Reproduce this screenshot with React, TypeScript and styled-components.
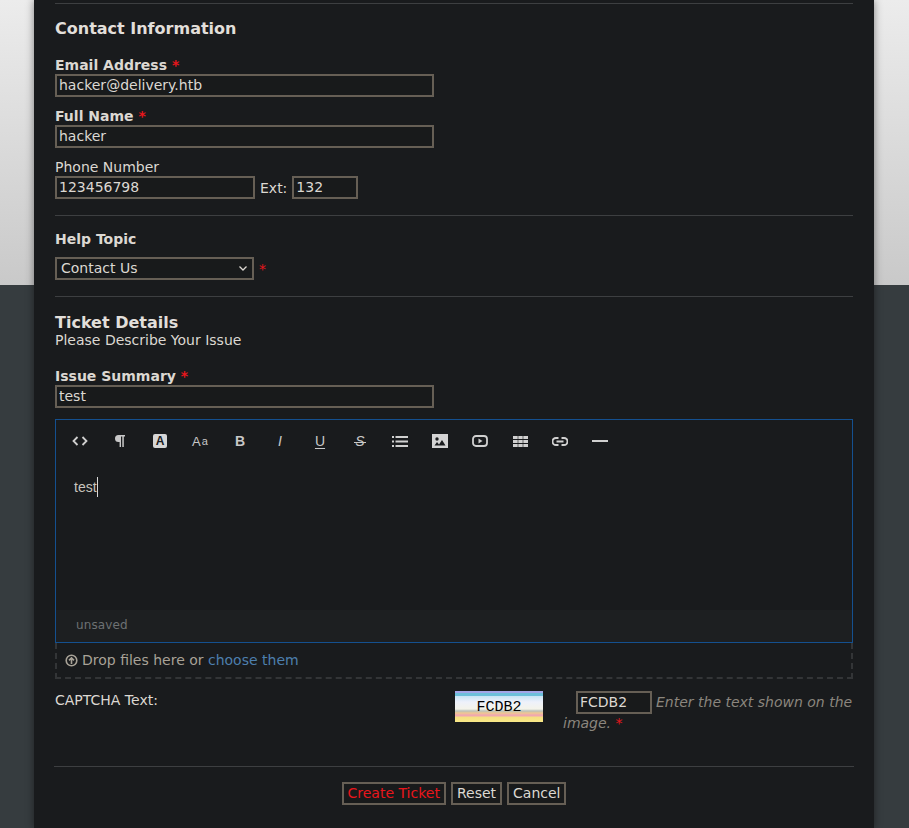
import React from 'react';
import styled, { createGlobalStyle } from 'styled-components';

const GlobalStyle = createGlobalStyle`
    html, body {
        margin: 0;
        height: 100%;
    }
    body {
        background: linear-gradient(#ececec, #c9c9c9) 0 0 / 100% 285px no-repeat, #363c3f;
        font-family: "DejaVu Sans", sans-serif;
        font-size: 14px;
        color: #dcd8d2;
        overflow: hidden;
    }
`;

const Card = styled.div`
    box-sizing: border-box;
    width: 840px;
    height: 828px;
    margin-left: 34px;
    padding: 3px 21px 0 21px;
    background: #191b1d;
    box-shadow: 0 0 8px rgba(0, 0, 0, 0.45);
`;

const Rule = styled.hr<{ $top?: number; $bottom?: number }>`
    border: 0;
    height: 1px;
    background: #3d3f41;
    margin: ${(p) => p.$top ?? 0}px 0 ${(p) => p.$bottom ?? 0}px 0;
`;

const FooterRule = styled(Rule)`
    margin-left: -1px;
    margin-right: -1px;
`;

const Heading = styled.h3<{ $top: number }>`
    margin: ${(p) => p.$top}px 0 0 0;
    font-size: 16px;
    line-height: 20px;
    font-weight: 700;
    color: #e2dfda;
`;

const Subtitle = styled.div`
    line-height: 16px;
    margin-top: -1px;
    color: #dcd8d2;
`;

const Label = styled.label<{ $top: number; $bold?: boolean }>`
    display: block;
    margin-top: ${(p) => p.$top}px;
    line-height: 17px;
    font-weight: ${(p) => (p.$bold ? 700 : 400)};
    color: #dcd8d2;
`;

const Req = styled.span`
    color: #e8161c;
`;

const Input = styled.input<{ $width: number }>`
    display: block;
    box-sizing: border-box;
    width: ${(p) => p.$width}px;
    height: 23px;
    padding: 0 2px 2px 2px;
    border: 2px solid #665f55;
    background: #181a1b;
    color: #dcd8d2;
    font-family: inherit;
    font-size: 14px;
    outline: none;
`;

const PhoneRow = styled.div`
    display: flex;
    align-items: center;
    gap: 5px;
`;

const HelpRow = styled.div`
    display: flex;
    align-items: center;
    gap: 5px;
    margin-top: 9px;
`;

const Select = styled.div`
    box-sizing: border-box;
    width: 199px;
    height: 23px;
    padding: 0 5px 0 4px;
    border: 2px solid #665f55;
    background: #181a1b;
    display: flex;
    align-items: center;
    justify-content: space-between;
    line-height: 19px;
`;

const Editor = styled.div`
    box-sizing: border-box;
    height: 224px;
    margin-top: 11px;
    border: 1px solid #14508f;
    display: flex;
    flex-direction: column;
`;

const Toolbar = styled.div`
    display: flex;
    height: 42px;
    padding-left: 4px;
`;

const Tool = styled.span`
    width: 40px;
    height: 42px;
    display: flex;
    align-items: center;
    justify-content: center;
    color: #c8c8c8;
    font-family: "Liberation Sans", sans-serif;
    font-size: 14px;
    font-weight: 400;
`;

const BoldTool = styled(Tool)`
    font-weight: 700;
`;

const ItalicTool = styled(Tool)`
    font-style: italic;
`;

const UnderTool = styled(Tool)`
    text-decoration: underline;
    text-underline-offset: 2px;
`;

const StrikeTool = styled(Tool)`
    position: relative;
    font-style: italic;

    &::after {
        content: "";
        position: absolute;
        left: 14px;
        top: 22px;
        width: 12px;
        height: 1px;
        background: #c8c8c8;
    }
`;

const BoxedA = styled.span`
    width: 14px;
    height: 14px;
    border-radius: 2px;
    background: #d6d6d6;
    color: #191b1d;
    font-size: 12px;
    font-weight: 700;
    line-height: 14px;
    text-align: center;
`;

const BigA = styled.span`
    font-size: 13px;
`;

const SmallA = styled.span`
    font-size: 11px;
    margin-left: 1px;
`;

const EditBody = styled.div`
    flex: 1;
    padding: 15px 0 0 18px;
    font-family: "Liberation Sans", sans-serif;
    font-size: 14px;
    line-height: 20px;
    color: #c8c4be;
`;

const Caret = styled.span`
    display: inline-block;
    width: 1px;
    height: 20px;
    background: #d8d8d8;
    vertical-align: -5px;
`;

const StatusBar = styled.div`
    height: 32px;
    padding-left: 20px;
    background: #1d1f21;
    color: #6d7173;
    font-size: 12px;
    line-height: 30px;
    letter-spacing: 0.1px;
`;

const DropZone = styled.div`
    box-sizing: border-box;
    height: 36px;
    padding-left: 8px;
    border: 2px dashed #333537;
    border-top: 0;
    display: flex;
    align-items: center;
    gap: 4px;
    color: #a8a297;
    line-height: 34px;
`;

const Choose = styled.span`
    color: #4d7fae;
`;

const CaptchaRow = styled.div`
    display: grid;
    grid-template-columns: 400px 108px 1fr;
    margin-top: 12px;
    height: 75px;
`;

const CaptchaLabel = styled.div`
    line-height: 18px;
`;

const CaptchaImage = styled.div`
    width: 88px;
    height: 31px;
    font-family: "Liberation Mono", monospace;
    font-size: 15px;
    line-height: 33px;
    text-align: center;
    color: #000000;
    background: linear-gradient(
        #a3a6e8 0,
        #a3a6e8 2px,
        #6cc0da 2px,
        #6cc0da 5px,
        #c8e4f4 5px,
        #eef1fb 11px,
        #f4f4ea 18px,
        #b8c0ba 20px,
        #f0c890 22px,
        #f0a8b0 24px,
        #f0a8b0 25px,
        #f5e080 26px,
        #f8e888 31px
    );
`;

const CaptchaField = styled.div`
    line-height: 19px;
    text-indent: 13px;
`;

const CaptchaInput = styled(Input)`
    display: inline-block;
    text-indent: 0;
    vertical-align: middle;
    margin-right: 4px;
`;

const Hint = styled.em`
    color: #8b867e;
`;

const Buttons = styled.div`
    display: flex;
    justify-content: center;
    gap: 5px;
    margin-top: 15px;
`;

const Button = styled.button<{ $primary?: boolean }>`
    box-sizing: border-box;
    height: 23px;
    padding: 0 4px 2px 4px;
    border: 2px solid #665f55;
    background: #181a1b;
    color: ${(p) => (p.$primary ? '#e8161c' : '#dcd8d2')};
    font-family: inherit;
    font-size: 14px;
`;

const CodeIcon = () => (
    <svg width="16" height="10" viewBox="0 0 16 10" fill="none" stroke="#d0d0d0" strokeWidth="1.8">
        <path d="M5.5 1 1.5 5l4 4M10.5 1l4 4-4 4" />
    </svg>
);

const PilcrowIcon = () => (
    <svg width="10" height="12" viewBox="0 0 10 12" fill="#c8c8c8">
        <path d="M3.5 0H10v1.5H8.8V12H7.3V1.5H6V12H4.6V7H3.5a3.5 3.5 0 0 1 0-7z" />
    </svg>
);

const ListIcon = () => (
    <svg width="16" height="11" viewBox="0 0 16 11" fill="#d0d0d0">
        <path d="M0 0h2v2H0zM0 4.5h2v2H0zM0 9h2v2H0zM3.5 0H16v2H3.5zM3.5 4.5H16v2H3.5zM3.5 9H16v2H3.5z" />
    </svg>
);

const ImageIcon = () => (
    <svg width="16" height="14" viewBox="0 0 16 14">
        <rect width="16" height="14" fill="#d4d4d4" />
        <circle cx="5" cy="5" r="1.7" fill="#191b1d" />
        <path d="M2.5 11.5 5 8l2 2.5L10 6l3.5 5.5z" fill="#191b1d" />
    </svg>
);

const VideoIcon = () => (
    <svg width="16" height="12" viewBox="0 0 16 12">
        <rect x="1" y="1" width="14" height="10" rx="3" fill="none" stroke="#d0d0d0" strokeWidth="1.8" />
        <path d="M6.5 3.5 10.5 6l-4 2.5z" fill="#d0d0d0" />
    </svg>
);

const TableIcon = () => (
    <svg width="15" height="11" viewBox="0 0 15 11">
        <rect width="15" height="11" fill="#d0d0d0" />
        <path d="M0 3.5h15M0 7.5h15" stroke="#191b1d" strokeWidth="1" />
        <path d="M5 0v11M10 0v11" stroke="#191b1d" strokeWidth="0.6" />
    </svg>
);

const LinkIcon = () => (
    <svg width="16" height="9" viewBox="0 0 16 9" fill="none" stroke="#d0d0d0" strokeWidth="1.9">
        <path d="M6.5 1H4a3.5 3.5 0 0 0 0 7h2.5M9.5 1H12a3.5 3.5 0 0 1 0 7H9.5M4.5 4.5h7" />
    </svg>
);

const RuleIcon = () => (
    <svg width="16" height="2" viewBox="0 0 16 2" fill="#d0d0d0">
        <rect width="16" height="2" />
    </svg>
);

const UploadIcon = () => (
    <svg width="13" height="13" viewBox="0 0 13 13" fill="none" stroke="#a8a297">
        <circle cx="6.5" cy="6.5" r="5.3" strokeWidth="1.6" />
        <path d="M6.5 10V4M4 6.4l2.5-2.5L9 6.4" strokeWidth="1.6" />
    </svg>
);

const Chevron = () => (
    <svg width="8" height="5" viewBox="0 0 8 5" fill="none" stroke="#dcd8d2" strokeWidth="1.3">
        <path d="M.5.5 4 4 7.5.5" />
    </svg>
);

export default function App() {
    return (
        <>
            <GlobalStyle />
            <Card>
                <Rule />
                <Heading $top={15}>Contact Information</Heading>
                <Label $top={18} $bold>
                    Email Address <Req>*</Req>
                </Label>
                <Input $width={379} defaultValue="hacker@delivery.htb" />
                <Label $top={11} $bold>
                    Full Name <Req>*</Req>
                </Label>
                <Input $width={379} defaultValue="hacker" />
                <Label $top={11}>Phone Number</Label>
                <PhoneRow>
                    <Input $width={200} defaultValue="123456798" />
                    <span>Ext:</span>
                    <Input $width={66} defaultValue="132" />
                </PhoneRow>
                <Rule $top={16} />
                <Label $top={15} $bold>
                    Help Topic
                </Label>
                <HelpRow>
                    <Select>
                        Contact Us
                        <Chevron />
                    </Select>
                    <Req>*</Req>
                </HelpRow>
                <Rule $top={16} />
                <Heading $top={16}>Ticket Details</Heading>
                <Subtitle>Please Describe Your Issue</Subtitle>
                <Label $top={20} $bold>
                    Issue Summary <Req>*</Req>
                </Label>
                <Input $width={379} defaultValue="test" />
                <Editor>
                    <Toolbar>
                        <Tool>
                            <CodeIcon />
                        </Tool>
                        <Tool>
                            <PilcrowIcon />
                        </Tool>
                        <Tool>
                            <BoxedA>A</BoxedA>
                        </Tool>
                        <Tool>
                            <BigA>A</BigA>
                            <SmallA>a</SmallA>
                        </Tool>
                        <BoldTool>B</BoldTool>
                        <ItalicTool>I</ItalicTool>
                        <UnderTool>U</UnderTool>
                        <StrikeTool>S</StrikeTool>
                        <Tool>
                            <ListIcon />
                        </Tool>
                        <Tool>
                            <ImageIcon />
                        </Tool>
                        <Tool>
                            <VideoIcon />
                        </Tool>
                        <Tool>
                            <TableIcon />
                        </Tool>
                        <Tool>
                            <LinkIcon />
                        </Tool>
                        <Tool>
                            <RuleIcon />
                        </Tool>
                    </Toolbar>
                    <EditBody>
                        test
                        <Caret />
                    </EditBody>
                    <StatusBar>unsaved</StatusBar>
                </Editor>
                <DropZone>
                    <UploadIcon />
                    <span>
                        Drop files here or <Choose>choose them</Choose>
                    </span>
                </DropZone>
                <CaptchaRow>
                    <CaptchaLabel>CAPTCHA Text:</CaptchaLabel>
                    <CaptchaImage>FCDB2</CaptchaImage>
                    <CaptchaField>
                        <CaptchaInput $width={76} defaultValue="FCDB2" />
                        <Hint>
                            Enter the text shown on the image. <Req>*</Req>
                        </Hint>
                    </CaptchaField>
                </CaptchaRow>
                <FooterRule />
                <Buttons>
                    <Button $primary>Create Ticket</Button>
                    <Button>Reset</Button>
                    <Button>Cancel</Button>
                </Buttons>
            </Card>
        </>
    );
}
